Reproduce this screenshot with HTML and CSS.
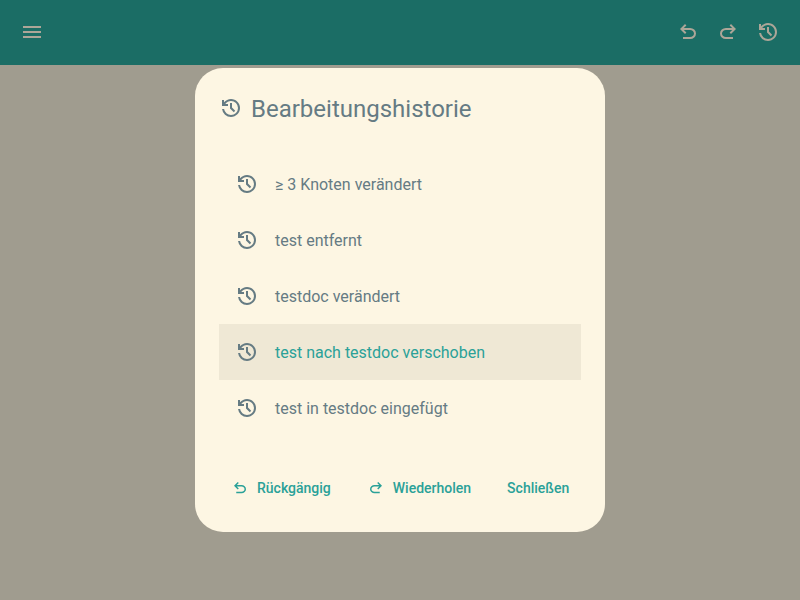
FILE: index.html
```html
<!DOCTYPE html>
<html lang="de">
<head>
<meta charset="utf-8">
<title>Bearbeitungshistorie</title>
<link rel="stylesheet" href="styles.css">
</head>
<body>
<svg class="symbols" aria-hidden="true">
<symbol id="undo" viewBox="0 -960 960 960"><path d="M280-200v-80h284q63 0 109.500-40T720-420q0-60-46.500-100T564-560H312l104 104-56 56-200-200 200-200 56 56-104 104h252q97 0 166.500 63T800-420q0 94-69.500 157T564-200H280Z"/></symbol>
<symbol id="redo" viewBox="0 -960 960 960"><path d="M396-200q-97 0-166.500-63T160-420q0-94 69.500-157T396-640h252L544-744l56-56 200 200-200 200-56-56 104-104H396q-63 0-109.500 40T240-420q0 60 46.500 100T396-280h284v80H396Z"/></symbol>
<symbol id="restore" viewBox="0 -960 960 960"><path d="M480-120q-138 0-240.500-91.500T122-440h82q14 104 92.500 172T480-200q117 0 198.500-81.500T760-480q0-117-81.500-198.500T480-760q-69 0-129 32t-101 88h110v80H120v-240h80v94q51-64 124.500-99T480-840q75 0 140.500 28.500t114 77q48.500 48.500 77 114T840-480q0 75-28.500 140.500t-77 114q-48.500 48.500-114 77T480-120Zm112-192L440-464v-216h80v184l128 128-56 56Z"/></symbol>
</svg>
<header class="toolbar">
<svg class="icon" viewBox="0 0 24 24"><path d="M3 18h18v-2H3v2zm0-5h18v-2H3v2zm0-7v2h18V6H3z"/></svg>
<nav class="actions">
<svg class="icon"><use href="#undo"/></svg>
<svg class="icon"><use href="#redo"/></svg>
<svg class="icon"><use href="#restore"/></svg>
</nav>
</header>
<main class="stage">
<section class="dialog">
<h1 class="title"><svg class="icon"><use href="#restore"/></svg><span>Bearbeitungshistorie</span></h1>
<ul class="list">
<li class="item"><svg class="icon"><use href="#restore"/></svg><span>≥ 3 Knoten verändert</span></li>
<li class="item"><svg class="icon"><use href="#restore"/></svg><span>test entfernt</span></li>
<li class="item"><svg class="icon"><use href="#restore"/></svg><span>testdoc verändert</span></li>
<li class="item selected"><svg class="icon"><use href="#restore"/></svg><span>test nach testdoc verschoben</span></li>
<li class="item"><svg class="icon"><use href="#restore"/></svg><span>test in testdoc eingefügt</span></li>
</ul>
<footer class="buttons">
<button class="button"><svg class="small"><use href="#undo"/></svg>Rückgängig</button>
<button class="button redo"><svg class="small"><use href="#redo"/></svg>Wiederholen</button>
<button class="button close">Schließen</button>
</footer>
</section>
</main>
</body>
</html>
```
FILE: styles.css
```css
* { box-sizing: border-box; }
body { margin: 0; height: 600px; overflow: hidden; background: #a09c8f; font-family: Roboto, sans-serif; color: #657b83; }
.symbols { display: none; }
.icon { width: 24px; height: 24px; fill: currentColor; flex: none; }
.toolbar { height: 65px; padding: 0 20px 1px; display: flex; align-items: center; justify-content: space-between; background: #1b6d65; color: #ada698; }
.actions { display: flex; gap: 16px; }
.stage { display: flex; justify-content: center; padding-top: 3px; }
.dialog { width: 410px; height: 464px; padding: 24px; border-radius: 28px; background: #fdf6e3; }
.title { margin: 0; height: 32px; display: flex; align-items: center; gap: 8px; font-size: 24px; line-height: 32px; font-weight: 400; }
.title span, .item span { padding-top: 2px; }
.list { margin: 32px 0 0; padding: 0; list-style: none; }
.item { height: 56px; padding: 0 16px; display: flex; align-items: center; gap: 16px; font-size: 16px; line-height: 24px; }
.selected { background: #efe8d5; }
.selected span { color: #2aa198; }
.buttons { display: flex; margin-top: 32px; }
.button { display: flex; align-items: center; gap: 8px; height: 40px; padding: 0; margin: 0 0 0 12px; border: 0; background: none; font: 500 14px/20px Roboto, sans-serif; color: #2aa198; }
.redo { margin-left: 36px; }
.close { margin-left: 36px; }
.small { width: 18px; height: 18px; fill: currentColor; }
```
